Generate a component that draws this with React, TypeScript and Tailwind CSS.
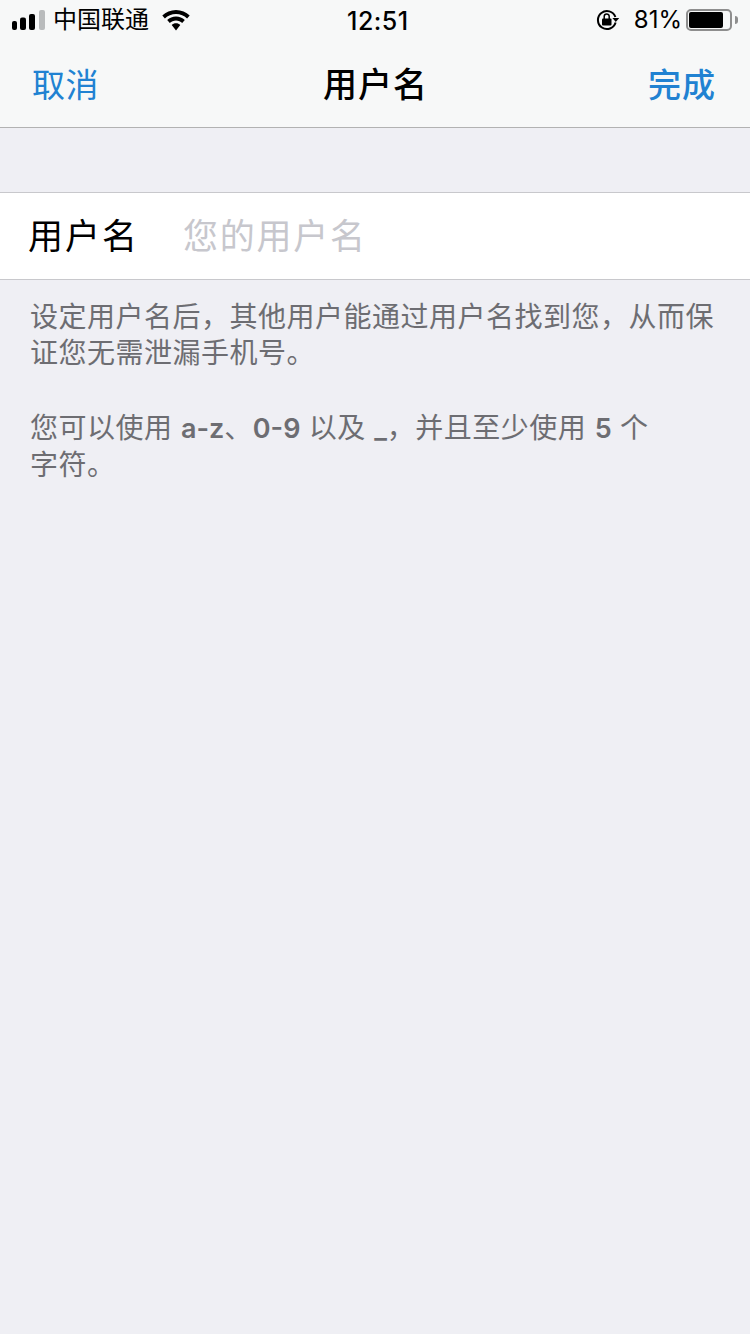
const font = { fontFamily: 'Inter, "Noto Sans CJK SC", sans-serif' };

function SignalIcon() {
  return (
    <svg width="33" height="20" viewBox="0 0 33 20">
      <rect x="0" y="11" width="5" height="9" rx="2" fill="#000" />
      <rect x="8" y="7.5" width="6" height="12.5" rx="2" fill="#000" />
      <rect x="17" y="4" width="6" height="16" rx="2" fill="#000" />
      <rect x="27" y="0" width="6" height="20" rx="2" fill="#b9bbbc" />
    </svg>
  );
}

function WifiIcon() {
  return (
    <svg width="28" height="21" viewBox="0 0 28 21">
      <path d="M14 0C8.6 0 3.8 2.1.3 5.5l2.6 2.9C5.8 5.6 9.7 3.9 14 3.9s8.2 1.7 11.1 4.5l2.6-2.9C24.2 2.1 19.4 0 14 0z" fill="#000" />
      <path d="M14 6.6c-3.4 0-6.5 1.3-8.8 3.5l2.6 2.9c1.6-1.5 3.8-2.5 6.2-2.5s4.6 1 6.2 2.5l2.6-2.9C20.5 7.9 17.4 6.6 14 6.6z" fill="#000" />
      <path d="M14 13.3c-1.7 0-3.2.6-4.3 1.7L14 20.6l4.3-5.6c-1.1-1.1-2.6-1.7-4.3-1.7z" fill="#000" />
    </svg>
  );
}

function RotationLockIcon() {
  return (
    <svg width="24" height="22" viewBox="0 0 24 22" fill="none">
      <path d="M19.6 13.5A9 9 0 1 1 19.4 8" stroke="#000" strokeWidth="2" />
      <path d="M16.4 8.9h6.8l-3.4 4z" fill="#000" />
      <rect x="6" y="9.5" width="9.5" height="7" rx="1" fill="#000" />
      <path d="M8.2 10V7.4a2.5 2.5 0 0 1 5 0V10" stroke="#000" strokeWidth="1.5" />
    </svg>
  );
}

function BatteryIcon() {
  return (
    <div className="flex items-center">
      <div className="w-[46px] h-[22px] rounded-[5px] border-2 border-[#8e8e8e] p-[1px]">
        <div className="h-full w-[34px] rounded-[2px] bg-black" />
      </div>
      <div className="ml-[3px] w-[3px] h-[8px] rounded-r-full bg-[#8e8e8e]" />
    </div>
  );
}

export default function App() {
  return (
    <div className="min-h-[1334px] bg-[#efeff4]" style={font}>
      <div className="bg-[#f7f8f8] border-b border-[#b2b2b2]">
        {/* Status bar */}
        <div className="relative h-[40px] flex items-center justify-between pl-[12px] pr-[12px]">
          <div className="flex items-center">
            <SignalIcon />
            <span className="ml-[8px] text-[24px] leading-none text-black">中国联通</span>
            <div className="ml-[13px]">
              <WifiIcon />
            </div>
          </div>
          <span className="absolute left-[347px] top-[6px] text-[25px] tracking-[0.5px] leading-[30px] font-medium text-black">12:51</span>
          <div className="flex items-center">
            <RotationLockIcon />
            <span className="ml-[14px] mr-[4px] text-[24px] leading-none text-black">81%</span>
            <BatteryIcon />
          </div>
        </div>

        {/* Nav bar */}
        <div className="h-[87px] flex items-center justify-between pl-[32px] pr-[34px] pt-[3px]">
          <span className="text-[33px] tracking-[0.5px] leading-none text-[#2182d2]">取消</span>
          <span className="ml-[4px] text-[34px] tracking-[1px] leading-none font-medium text-black">用户名</span>
          <span className="text-[33px] tracking-[1px] leading-none font-medium text-[#2182d2]">完成</span>
        </div>
      </div>

      {/* Username field */}
      <div className="mt-[64px] h-[88px] flex items-center bg-white border-y border-[#c8c8cc] pl-[28px]">
        <span className="w-[155px] text-[35px] tracking-[2px] leading-none text-black">用户名</span>
        <input
          className="flex-1 outline-none bg-transparent text-[35px] tracking-[1.75px] placeholder:text-[#c7c7cd]"
          style={font}
          placeholder="您的用户名"
        />
      </div>

      {/* Help text */}
      <div className="pt-[19px] pl-[30px] pr-[30px] text-[28px] tracking-[0.5px] leading-[36px] text-[#6d6d72]">
        <p>
          设定用户名后，其他用户能通过用户名找到您，从而保
          <br />
          证您无需泄漏手机号。
        </p>
        <p className="mt-[39px]">
          您可以使用 <span className="font-semibold text-[27px] tracking-normal">a-z</span>、<span className="font-semibold text-[27px] tracking-normal">0-9</span> 以及 <span className="font-semibold text-[27px] tracking-normal">_</span>，并且至少使用 <span className="font-semibold text-[27px] tracking-normal">5</span> 个
          <br />
          字符。
        </p>
      </div>
    </div>
  );
}
